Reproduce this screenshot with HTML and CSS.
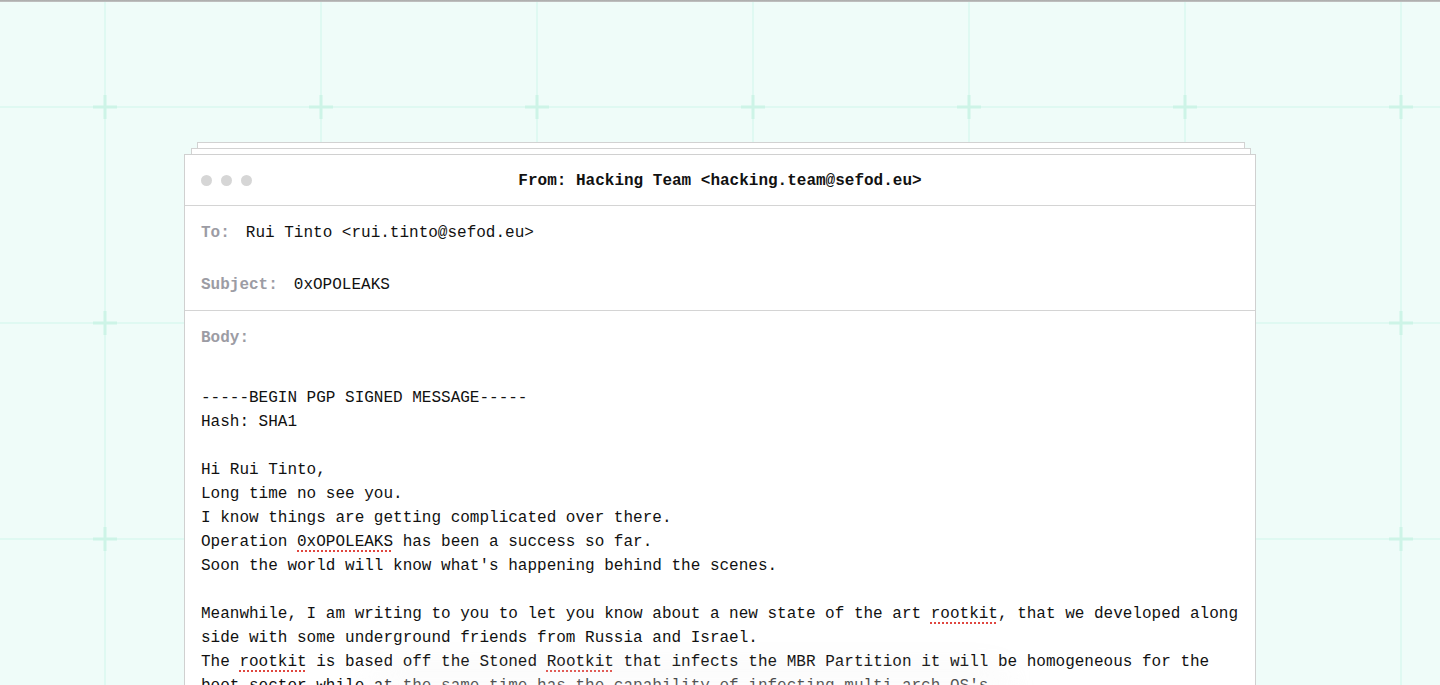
FILE: index.html
```html
<!DOCTYPE html>
<html lang="en">
<head>
<meta charset="utf-8">
<title>From: Hacking Team</title>
<link rel="stylesheet" href="styles.css">
</head>
<body>
<div class="topline"></div>
<main class="stage">
  <div class="sheet sheet-back"></div>
  <div class="sheet sheet-mid"></div>
  <section class="mail">
    <header class="mail-head">
      <div class="dots"><span class="dot"></span><span class="dot"></span><span class="dot"></span></div>
      <h1 class="mail-title">From: Hacking Team &lt;hacking.team@sefod.eu&gt;</h1>
    </header>
    <div class="meta">
      <div class="row"><span class="label">To:</span><span class="value">Rui Tinto &lt;rui.tinto@sefod.eu&gt;</span></div>
      <div class="row"><span class="label">Subject:</span><span class="value">0xOPOLEAKS</span></div>
    </div>
    <div class="body-sec">
      <div class="row"><span class="label">Body:</span></div>
      <pre class="msg">-----BEGIN PGP SIGNED MESSAGE-----
Hash: SHA1

Hi Rui Tinto,
Long time no see you.
I know things are getting complicated over there.
Operation <span class="sp">0xOPOLEAKS</span> has been a success so far.
Soon the world will know what's happening behind the scenes.

Meanwhile, I am writing to you to let you know about a new state of the art <span class="sp">rootkit</span>, that we developed along side with some underground friends from Russia and Israel.
The <span class="sp">rootkit</span> is based off the Stoned <span class="sp">Rootkit</span> that infects the MBR Partition it will be homogeneous for the boot sector while at the same time has the capability of infecting multi arch OS's.</pre>
    </div>
  </section>
</main>
<div class="glow"></div>
</body>
</html>
```
FILE: styles.css
```css
html, body {
  margin: 0;
  padding: 0;
}
body {
  height: 685px;
  overflow: hidden;
  background-color: #effcf9;
  background-image: url("data:image/svg+xml;utf8,<svg xmlns='http://www.w3.org/2000/svg' width='216' height='216'><rect x='107' y='0' width='2' height='216' fill='%23dff9f2'/><rect x='0' y='107' width='216' height='2' fill='%23dff9f2'/><rect x='96' y='106.5' width='24' height='3' fill='%23cdf4e7'/><rect x='106.5' y='96' width='3' height='24' fill='%23cdf4e7'/></svg>");
  background-position: -3px -1px;
  background-repeat: repeat;
  font-family: "Liberation Mono", "DejaVu Sans Mono", monospace;
  color: #111;
}
.topline {
  height: 2px;
  background: linear-gradient(#a9a9a9, #c4c4c4);
}
.stage {
  width: 1072px;
  margin: 140px auto 0;
}
.sheet {
  height: 5px;
  background: #fff;
  border: 1px solid #d2d2d2;
  border-bottom: none;
}
.sheet-back {
  margin: 0 11px 0 13px;
}
.sheet-mid {
  margin: 0 5px 0 7px;
}
.mail {
  background: #fff;
  border: 1px solid #d0d0d0;
  border-bottom: none;
  height: 600px;
}
.mail-head {
  position: relative;
  display: flex;
  align-items: center;
  justify-content: center;
  box-sizing: border-box;
  height: 51px;
  padding-top: 2px;
  border-bottom: 1px solid #d4d4d4;
}
.dots {
  position: absolute;
  left: 16px;
  top: 20px;
  display: flex;
  gap: 9px;
}
.dot {
  width: 11px;
  height: 11px;
  border-radius: 50%;
  background: #d6d6d6;
}
.mail-title {
  margin: 0;
  font-size: 16px;
  font-weight: bold;
  line-height: 24px;
  color: #111;
}
.meta {
  border-bottom: 1px solid #d4d4d4;
}
.row {
  display: flex;
  align-items: center;
  box-sizing: border-box;
  height: 52px;
  padding: 2px 16px 0;
  font-size: 16px;
  line-height: 24px;
}
.label {
  color: #9c9ca4;
  font-weight: bold;
  margin-right: 16px;
}
.value {
  color: #111;
}
.msg {
  margin: 23px 0 0;
  padding: 0 16px;
  font-family: "Liberation Mono", "DejaVu Sans Mono", monospace;
  font-size: 16px;
  line-height: 24px;
  white-space: pre-wrap;
  word-wrap: break-word;
  color: #111;
}
.sp {
  text-decoration: underline dotted #e0463f;
  text-decoration-thickness: 2px;
  text-underline-offset: 4px;
}
.glow {
  position: fixed;
  left: 380px;
  top: 680px;
  width: 620px;
  height: 60px;
  background: rgba(255, 255, 255, 0.5);
  filter: blur(14px);
  box-shadow: 0 -6px 30px rgba(0, 0, 0, 0.06);
}
```
